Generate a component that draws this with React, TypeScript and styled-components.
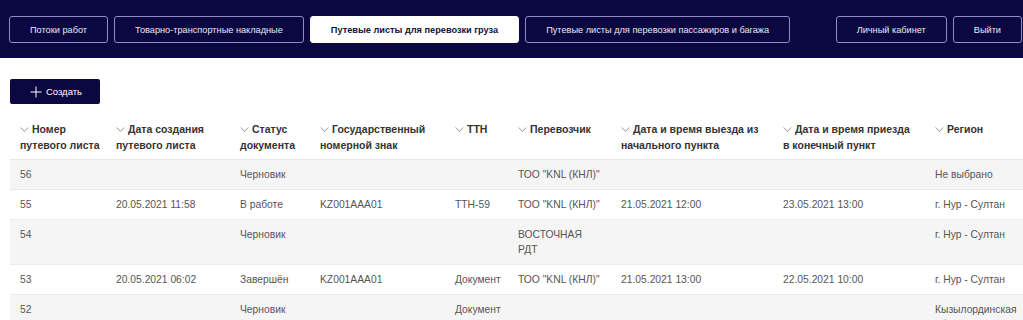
import React from 'react'
import styled, { createGlobalStyle } from 'styled-components'

const GlobalStyle = createGlobalStyle`
  html, body {
    margin: 0;
    padding: 0;
    background: #fff;
    overflow: hidden;
  }
  body {
    font-family: 'Liberation Sans', Arial, sans-serif;
  }
`

const NAVY = '#0b0741'

const TopBar = styled.header`
  height: 58px;
  box-sizing: border-box;
  background: ${NAVY};
  padding: 16px 1px 0 9px;
  display: flex;
  justify-content: space-between;
  align-items: flex-start;
`

const NavGroup = styled.nav`
  display: flex;
  gap: 6px;
`

const NavButton = styled.button<{ $active?: boolean }>`
  height: 27px;
  padding: 0 20px;
  box-sizing: border-box;
  border: 1px solid ${(p) => (p.$active ? '#fff' : '#8d8cc4')};
  border-radius: 3px;
  background: ${(p) => (p.$active ? '#fff' : 'transparent')};
  color: ${(p) => (p.$active ? '#15123a' : '#e8e8f4')};
  font-family: inherit;
  font-size: 9.2px;
  font-weight: ${(p) => (p.$active ? 700 : 400)};
  white-space: nowrap;
  cursor: pointer;
`

const Content = styled.main`
  padding: 21px 0 0 10px;
`

const CreateButton = styled.button`
  width: 90px;
  height: 25px;
  border: none;
  border-radius: 2px;
  background: ${NAVY};
  color: #fff;
  font-family: inherit;
  font-size: 9.5px;
  display: flex;
  align-items: center;
  justify-content: center;
  gap: 4px;
  padding: 0 0 0 2px;
  cursor: pointer;
`

const Table = styled.table`
  margin-top: 10px;
  border-collapse: collapse;
  table-layout: fixed;
  width: 1013px;
`

const Col = styled.col<{ $w: number }>`
  width: ${(p) => p.$w}px;
`

const HeadCell = styled.th`
  text-align: left;
  vertical-align: top;
  padding: 7px 0 6px 10px;
  font-size: 10.5px;
  line-height: 16px;
  font-weight: 700;
  color: #333;
  white-space: pre;
  border-bottom: 1px solid #e6e6e6;
`

const Chevron = styled.svg`
  width: 9px;
  height: 5px;
  margin: 0 3px 1px 0;
  vertical-align: middle;
`

const Row = styled.tr<{ $shade: boolean }>`
  background: ${(p) => (p.$shade ? '#f5f5f5' : '#fff')};
  border-bottom: 1px solid #ebebeb;
`

const Cell = styled.td`
  vertical-align: top;
  padding: 7px 4px 7px 10px;
  font-size: 10.3px;
  line-height: 15px;
  color: #555;
  white-space: pre-line;
`

const columns: [string, number][] = [
  ['Номер\nпутевого листа', 96],
  ['Дата создания\nпутевого листа', 124],
  ['Статус\nдокумента', 80],
  ['Государственный\nномерной знак', 135],
  ['ТТН', 63],
  ['Перевозчик', 103],
  ['Дата и время выезда из\nначального пункта', 162],
  ['Дата и время приезда\nв конечный пункт', 152],
  ['Регион', 98],
]

const rows: string[][] = [
  ['56', '', 'Черновик', '', '', 'ТОО "KNL (КНЛ)"', '', '', 'Не выбрано'],
  ['55', '20.05.2021 11:58', 'В работе', 'KZ001AAA01', 'ТТН-59', 'ТОО "KNL (КНЛ)"', '21.05.2021 12:00', '23.05.2021 13:00', 'г. Нур - Султан'],
  ['54', '', 'Черновик', '', '', 'ВОСТОЧНАЯ\nРДТ', '', '', 'г. Нур - Султан'],
  ['53', '20.05.2021 06:02', 'Завершён', 'KZ001AAA01', 'Документ', 'ТОО "KNL (КНЛ)"', '21.05.2021 13:00', '22.05.2021 10:00', 'г. Нур - Султан'],
  ['52', '', 'Черновик', '', 'Документ', '', '', '', 'Кызылординская\nобласть'],
]

const SortIcon = () => (
  <Chevron viewBox="0 0 9 5">
    <polyline points="0.7,0.5 4.5,4.4 8.3,0.5" fill="none" stroke="#8a8a8a" strokeWidth="0.9" />
  </Chevron>
)

export default function App() {
  return (
    <>
      <GlobalStyle />
      <TopBar>
        <NavGroup>
          <NavButton>Потоки работ</NavButton>
          <NavButton>Товарно-транспортные накладные</NavButton>
          <NavButton $active>Путевые листы для перевозки груза</NavButton>
          <NavButton>Путевые листы для перевозки пассажиров и багажа</NavButton>
        </NavGroup>
        <NavGroup>
          <NavButton>Личный кабинет</NavButton>
          <NavButton>Выйти</NavButton>
        </NavGroup>
      </TopBar>
      <Content>
        <CreateButton>
          <svg width="12" height="12" viewBox="0 0 12 12">
            <path d="M6 0.5V11.5M0.5 6H11.5" stroke="#fff" strokeWidth="1" fill="none" />
          </svg>
          Создать
        </CreateButton>
        <Table>
          <colgroup>
            {columns.map(([t, w]) => (
              <Col key={t} $w={w} />
            ))}
          </colgroup>
          <thead>
            <tr>
              {columns.map(([t]) => (
                <HeadCell key={t}>
                  <SortIcon />
                  {t}
                </HeadCell>
              ))}
            </tr>
          </thead>
          <tbody>
            {rows.map((r, i) => (
              <Row key={r[0]} $shade={i % 2 === 0}>
                {r.map((v, j) => (
                  <Cell key={j}>{v}</Cell>
                ))}
              </Row>
            ))}
          </tbody>
        </Table>
      </Content>
    </>
  )
}
